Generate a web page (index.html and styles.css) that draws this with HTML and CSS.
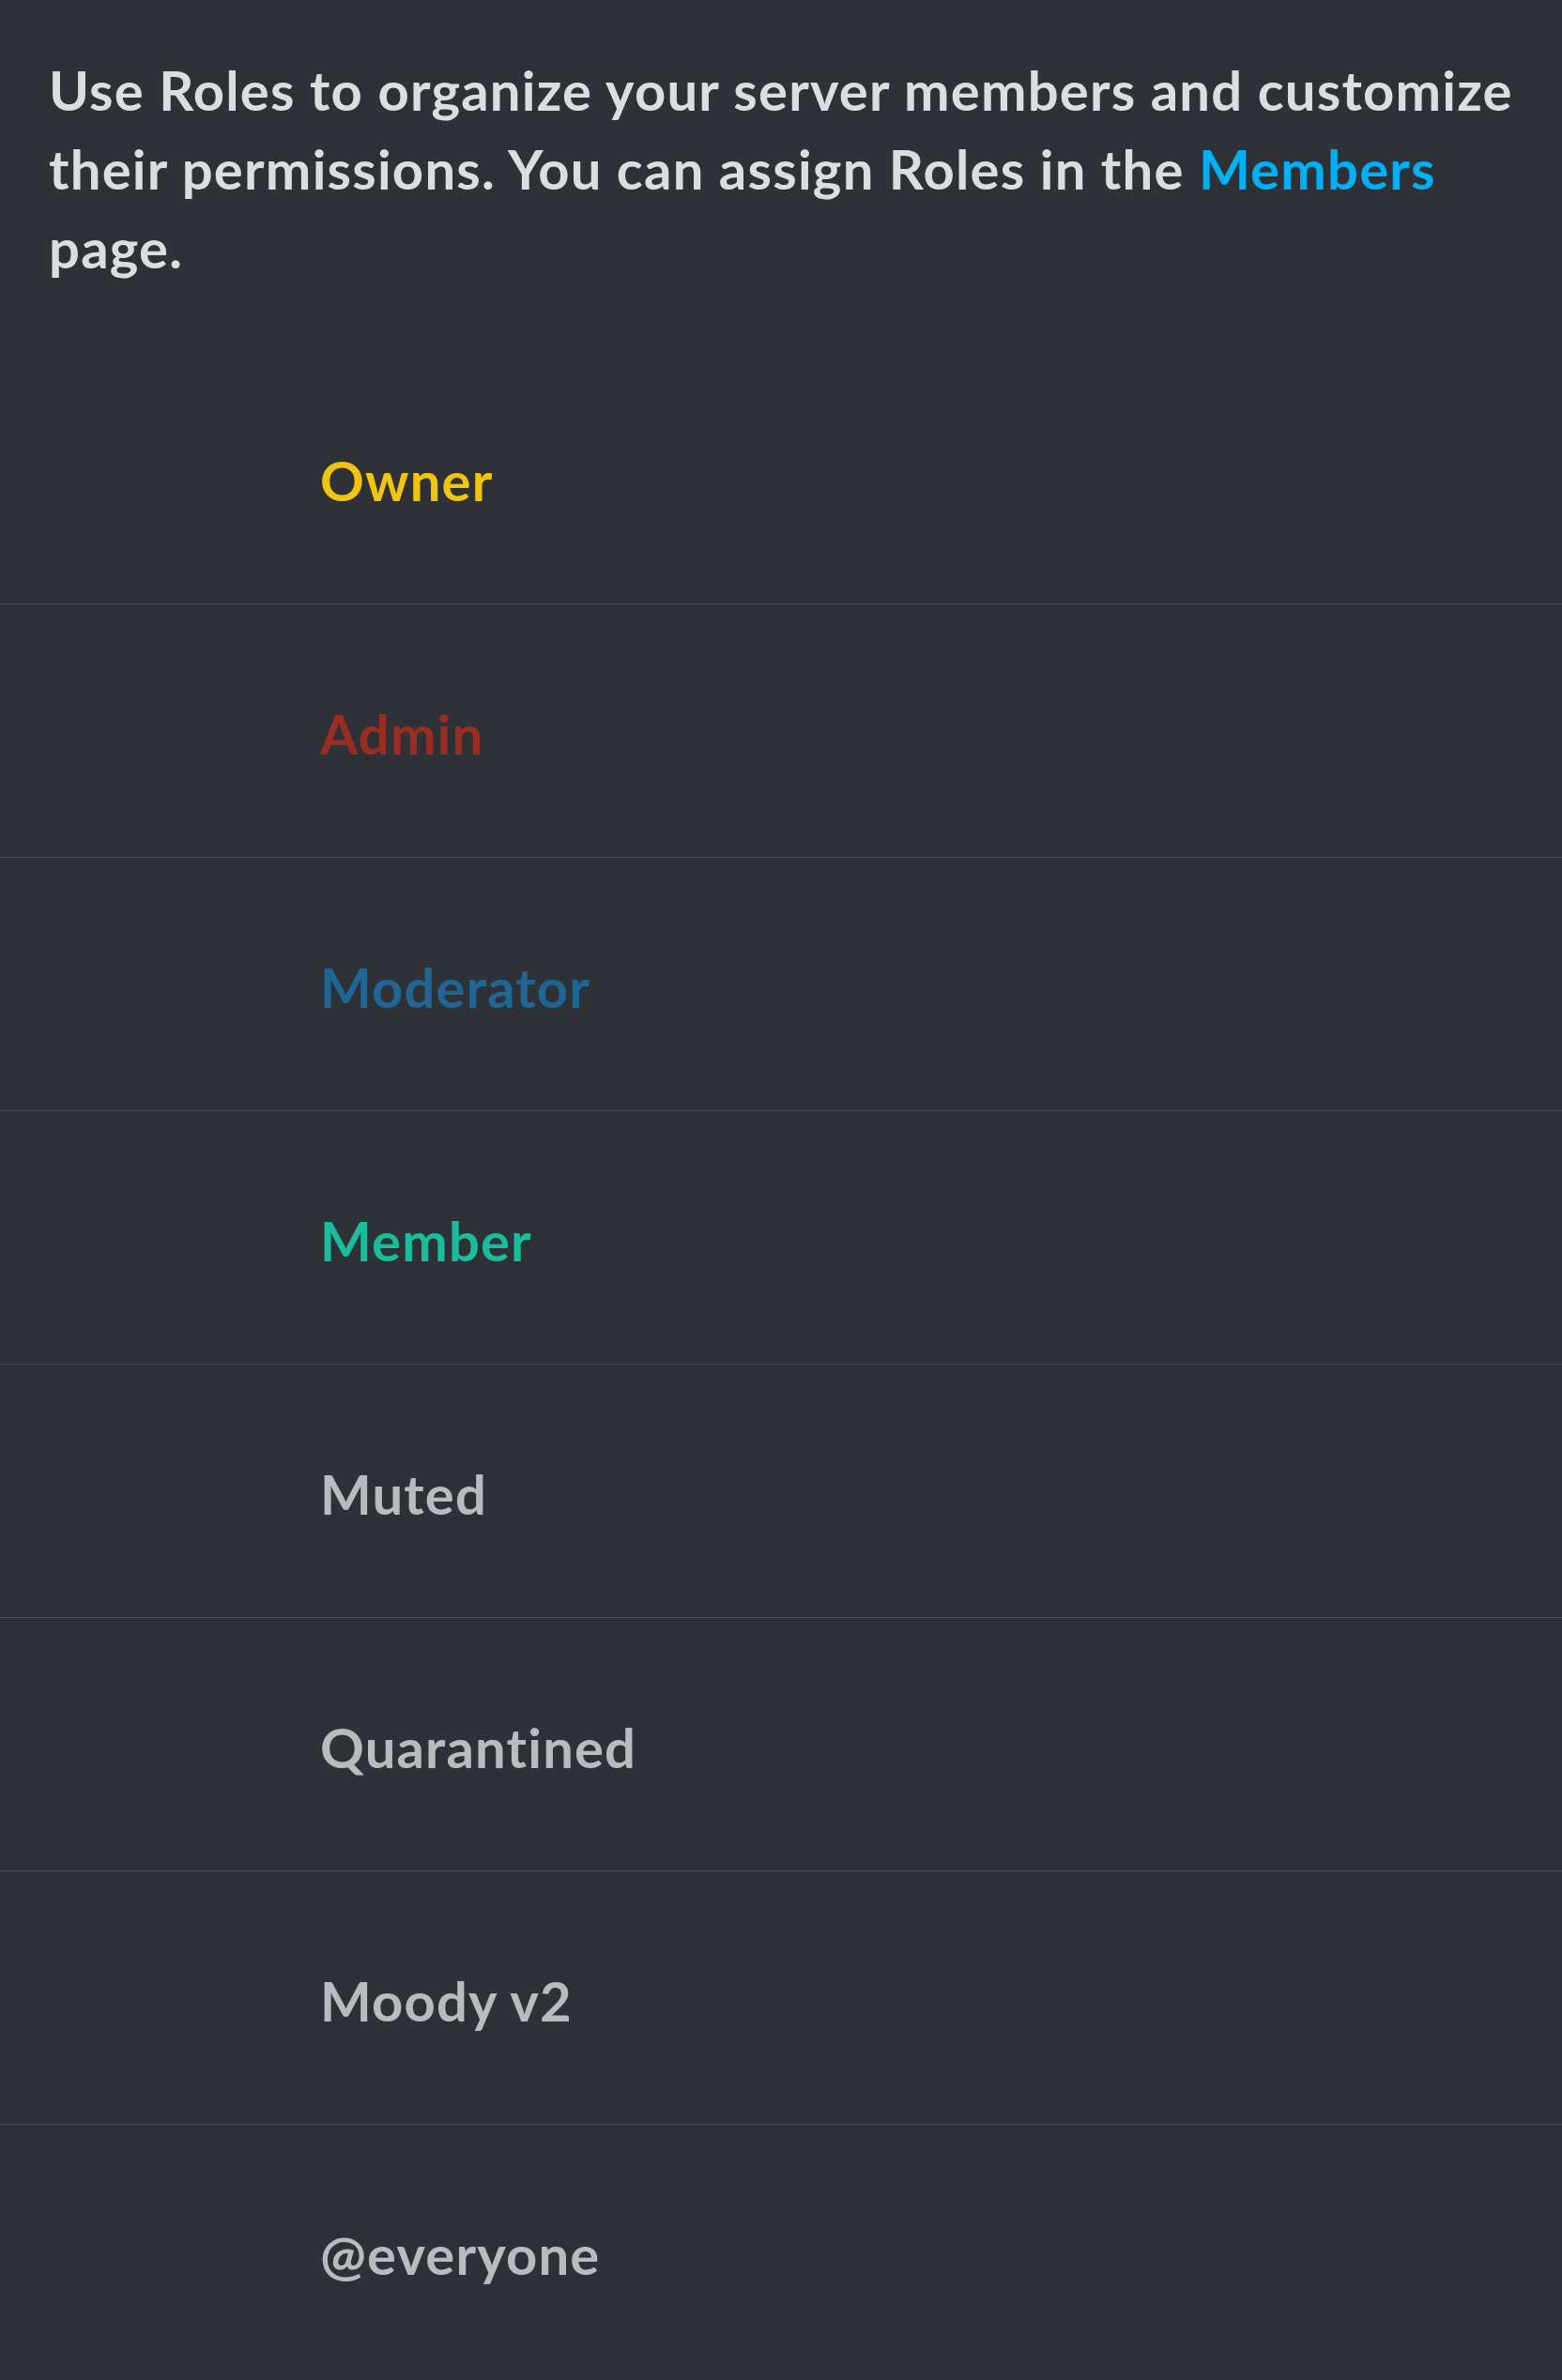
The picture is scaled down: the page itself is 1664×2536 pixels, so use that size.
FILE: index.html
```html
<!DOCTYPE html>
<html lang="en">
<head>
<meta charset="utf-8">
<title>Roles</title>
<link rel="stylesheet" href="styles.css">
</head>
<body>
<div class="page">
  <p class="intro">Use Roles to organize your server members and customize their permissions. You can assign Roles in the <a class="link" href="#">Members</a> page.</p>
  <ul class="roles">
    <li class="role"><span class="name owner">Owner</span></li>
    <li class="role"><span class="name admin">Admin</span></li>
    <li class="role"><span class="name moderator">Moderator</span></li>
    <li class="role"><span class="name member">Member</span></li>
    <li class="role"><span class="name plain">Muted</span></li>
    <li class="role"><span class="name plain">Quarantined</span></li>
    <li class="role"><span class="name plain">Moody v2</span></li>
    <li class="role"><span class="name plain">@everyone</span></li>
  </ul>
</div>
</body>
</html>
```

FILE: styles.css
```css
html, body {
  margin: 0;
  padding: 0;
  background: #2e3136;
}
.page {
  font-family: Lato, "Open Sans", "Liberation Sans", sans-serif;
  font-weight: 700;
  font-size: 58px;
  line-height: 84px;
  color: #dcddde;
}
.intro {
  margin: 0;
  padding: 54px 40px 0 52px;
  letter-spacing: 1.2px;
}
.link {
  color: #00b0f4;
  text-decoration: none;
}
.roles {
  list-style: none;
  margin: 68px 0 0 0;
  padding: 0;
}
.role {
  box-sizing: border-box;
  height: 270px;
  padding: 96px 0 0 341px;
  border-bottom: 1px solid #464952;
  letter-spacing: 1.15px;
}
.role:last-child {
  border-bottom: none;
}
.owner { color: #f1c40f; }
.admin { color: #992d22; }
.moderator { color: #206694; }
.member { color: #1abc9c; }
.plain { color: #b9bbbe; }
```
